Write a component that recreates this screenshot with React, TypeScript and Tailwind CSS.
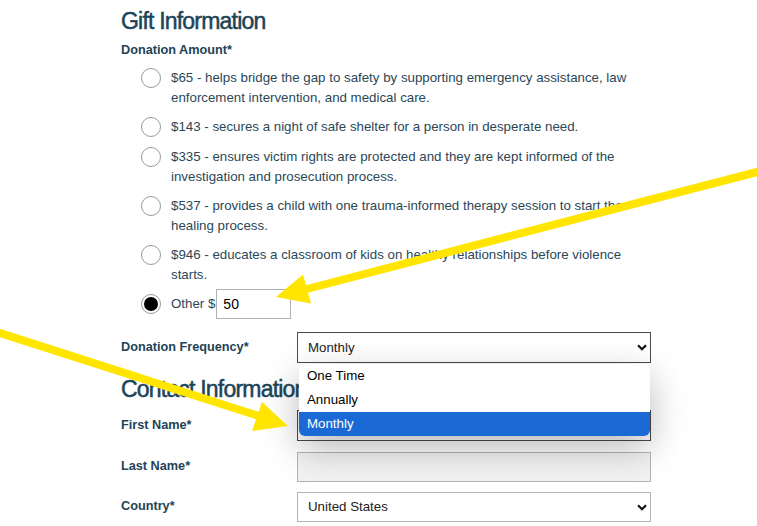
import React from "react";

const options = [
  "$65 - helps bridge the gap to safety by supporting emergency assistance, law enforcement intervention, and medical care.",
  "$143 - secures a night of safe shelter for a person in desperate need.",
  "$335 - ensures victim rights are protected and they are kept informed of the investigation and prosecution process.",
  "$537 - provides a child with one trauma-informed therapy session to start the healing process.",
  "$946 - educates a classroom of kids on healthy relationships before violence starts.",
];

function Chevron() {
  return (
    <svg width="10" height="7" viewBox="0 0 10 7" className="shrink-0">
      <polyline points="1,1.2 5,5.2 9,1.2" fill="none" stroke="#111" strokeWidth="2.2" />
    </svg>
  );
}

function Radio({ checked }: { checked?: boolean }) {
  return (
    <div className="w-[20px] h-[20px] rounded-full border border-[#9a9a9a] bg-white flex items-center justify-center shrink-0">
      {checked && <div className="w-[14px] h-[14px] rounded-full bg-black" />}
    </div>
  );
}

export default function App() {
  return (
    <div
      className="relative w-[757px] h-[526px] overflow-hidden bg-white"
      style={{ fontFamily: '"Liberation Sans", Arial, sans-serif' }}
    >
      <div className="pl-[121px] pt-[8px] w-[651px]">
        <h2 className="text-[23px] leading-[26px] tracking-[-0.8px] text-[#1c4458] [-webkit-text-stroke:0.5px_#1c4458]">Gift Information</h2>
        <div className="mt-[7px] text-[12.7px] leading-[18px] font-bold text-[#1f4356]">Donation Amount*</div>
        <div className="mt-[4px] pl-[20px] flex flex-col">
          {options.map((o, i) => (
            <div key={i} className="flex items-start gap-[10px] py-[5px]">
              <Radio />
              <div className="w-[475px] text-[13.3px] leading-[19.5px] text-[#2b4757]">{o}</div>
            </div>
          ))}
          <div className="flex items-center gap-[10px] h-[30px]">
            <Radio checked />
            <div className="flex items-center">
              <span className="text-[13.3px] text-[#2b4757]">Other $</span>
              <div className="ml-[1px] w-[75px] h-[30px] border border-[#b0b0b0] flex items-center pl-[6px] text-[14px] text-black">50</div>
            </div>
          </div>
        </div>

        <div className="mt-[13px] flex items-center">
          <div className="w-[176px] text-[12.7px] font-bold text-[#1f4356]">Donation Frequency*</div>
          <div className="relative w-[354px]">
            <div className="h-[31px] border border-[#4a4a4a] flex items-center justify-between pl-[10px] pr-[3px] text-[13.3px] text-[#222]">
              <span>Monthly</span>
              <Chevron />
            </div>
            <div className="absolute left-[2px] top-[32px] w-[351px] bg-white rounded-[6px] overflow-hidden shadow-[0_12px_36px_rgba(0,0,0,0.28)] z-10 text-[13.3px] text-black">
              <div className="h-[24px] flex items-center pl-[8px]">One Time</div>
              <div className="h-[24px] flex items-center pl-[8px]">Annually</div>
              <div className="h-[24px] flex items-center pl-[8px] bg-[#1a69d4] text-white">Monthly</div>
            </div>
          </div>
        </div>

        <h2 className="mt-[13px] text-[23px] leading-[26px] tracking-[-0.8px] text-[#1c4458] [-webkit-text-stroke:0.5px_#1c4458]">Contact Information</h2>

        <div className="mt-[8px] flex items-center">
          <div className="w-[176px] text-[12.7px] font-bold text-[#1f4356]">First Name*</div>
          <div className="w-[354px] h-[31px] border border-[#4a4a4a] bg-white" />
        </div>
        <div className="mt-[11px] flex items-center">
          <div className="w-[176px] text-[12.7px] font-bold text-[#1f4356]">Last Name*</div>
          <div className="w-[354px] h-[30px] border border-[#b4b4b4] bg-[#f2f2f2]" />
        </div>
        <div className="mt-[10px] flex items-center">
          <div className="w-[176px] text-[12.7px] font-bold text-[#1f4356]">Country*</div>
          <div className="w-[354px] h-[30px] border border-[#b4b4b4] flex items-center justify-between pl-[10px] pr-[3px] text-[13.3px] text-[#222]">
            <span>United States</span>
            <Chevron />
          </div>
        </div>
      </div>

      <svg className="absolute inset-0 z-20 pointer-events-none" width="757" height="526" viewBox="0 0 757 526">
        <line x1="762" y1="170.7" x2="303" y2="290" stroke="#ffe500" strokeWidth="8" />
        <polygon points="276,297 303,274.5 311,303.5" fill="#ffe500" />
        <line x1="-5" y1="331.4" x2="262" y2="417" stroke="#ffe500" strokeWidth="8" />
        <polygon points="288,426 262,402 252,431" fill="#ffe500" />
      </svg>
    </div>
  );
}
